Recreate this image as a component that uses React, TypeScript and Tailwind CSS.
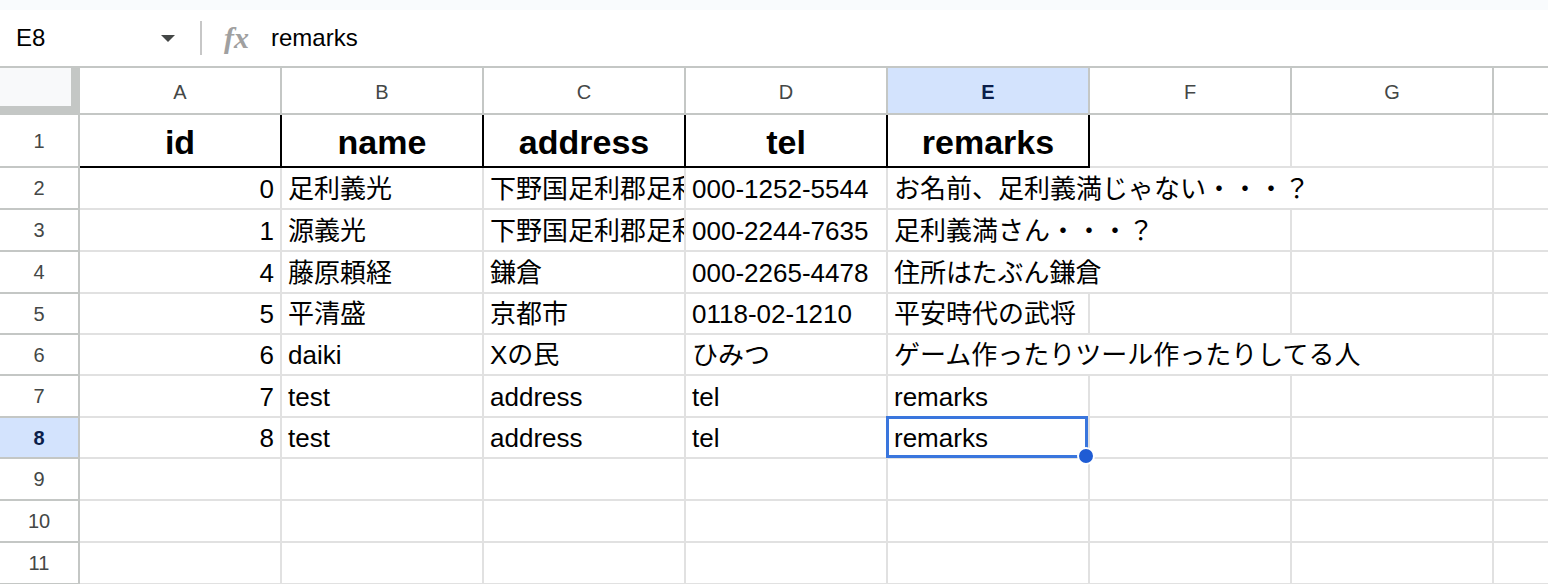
const cols = ["A", "B", "C", "D", "E", "F", "G", "H"];

type Cell = { v: string; right?: boolean; clip?: boolean };

const body: Cell[][] = [
  [{ v: "0", right: true }, { v: "足利義光" }, { v: "下野国足利郡足利荘", clip: true }, { v: "000-1252-5544" }, { v: "お名前、足利義満じゃない・・・？" }],
  [{ v: "1", right: true }, { v: "源義光" }, { v: "下野国足利郡足利荘", clip: true }, { v: "000-2244-7635" }, { v: "足利義満さん・・・？" }],
  [{ v: "4", right: true }, { v: "藤原頼経" }, { v: "鎌倉" }, { v: "000-2265-4478" }, { v: "住所はたぶん鎌倉" }],
  [{ v: "5", right: true }, { v: "平清盛" }, { v: "京都市" }, { v: "0118-02-1210" }, { v: "平安時代の武将" }],
  [{ v: "6", right: true }, { v: "daiki" }, { v: "Xの民" }, { v: "ひみつ" }, { v: "ゲーム作ったりツール作ったりしてる人" }],
  [{ v: "7", right: true }, { v: "test" }, { v: "address" }, { v: "tel" }, { v: "remarks" }],
  [{ v: "8", right: true }, { v: "test" }, { v: "address" }, { v: "tel" }, { v: "remarks" }],
];

// cells whose right gridline is covered by overflowing text
const hidden: Record<number, number[]> = { 2: [4, 5], 3: [4], 4: [4], 6: [4, 5] };

const font = { fontFamily: '"Liberation Sans", Arial, "Noto Sans CJK JP", sans-serif' };

function ColHeader({ c, i }: { c: string; i: number }) {
  const sel = c === "E";
  return (
    <div
      className={
        "flex items-center justify-center border-b-2 border-[#c4c7c5] pt-[2px] text-[20px] " +
        (i < 7 ? "border-r-2 " : "") +
        (sel ? "bg-[#d3e3fd] font-bold text-[#0b1e4a]" : "text-[#444746]")
      }
    >
      {i < 7 ? c : ""}
    </div>
  );
}

function RowHeader({ n }: { n: number }) {
  const sel = n === 8;
  return (
    <div
      className={
        "flex items-center justify-center border-b-2 border-r-2 border-[#c4c7c5] text-[20px] " +
        (sel ? "bg-[#d3e3fd] font-bold text-[#0b1e4a]" : "text-[#444746]")
      }
    >
      {n}
    </div>
  );
}

export default function App() {
  const titles = ["id", "name", "address", "tel", "remarks"];
  return (
    <div className="h-[584px] w-[1548px] overflow-hidden bg-white text-black" style={font}>
      {/* formula bar */}
      <div className="h-[10px] bg-[#f9fbfd]" />
      <div className="flex h-[58px] items-center border-b-2 border-[#c4c7c5] bg-white">
        <div className="flex w-[200px] items-center justify-between pl-[16px] pr-[25px]">
          <span className="text-[24px] leading-none">E8</span>
          <span className="h-0 w-0 border-l-[7px] border-r-[7px] border-t-[7px] border-l-transparent border-r-transparent border-t-[#444746]" />
        </div>
        <div className="h-[34px] w-[2px] bg-[#c7c7c7]" />
        <span
          className="ml-[22px] text-[30px] font-bold italic leading-none text-[#a0a0a0]"
          style={{ fontFamily: '"Liberation Serif", serif' }}
        >
          fx
        </span>
        <span className="ml-[22px] text-[24px] leading-none">remarks</span>
      </div>

      {/* grid */}
      <div className="grid grid-cols-[80px_repeat(7,202px)_1fr] grid-rows-[47px_53px_42px_42px_42px_41px_41px_42px_41px_42px_42px_42px]">
        {/* corner */}
        <div className="border-b-[9px] border-r-[9px] border-[#c4c7c5] bg-[#f8f9fa]" />
        {cols.map((c, i) => (
          <ColHeader key={c} c={c} i={i} />
        ))}

        {/* row 1 titles */}
        <RowHeader n={1} />
        {cols.map((c, i) =>
          i < 5 ? (
            <div
              key={c}
              className="flex min-w-0 items-end justify-center border-b-2 border-r-2 border-black pb-[5px] text-[34px] font-bold leading-[38px]"
            >
              {titles[i]}
            </div>
          ) : (
            <div key={c} className={"border-b-2 border-[#e1e1e1] " + (i < 7 ? "border-r-2" : "")} />
          )
        )}

        {body.map((row, ri) => {
          const n = ri + 2;
          const isSel = n === 8;
          return [
            <RowHeader key={"h" + n} n={n} />,
            ...cols.map((c, i) => {
              const cell = row[i];
              const noRight = (hidden[n] || []).includes(i) || i === 7;
              return (
                <div
                  key={c + n}
                  className={
                    "relative flex min-w-0 items-end whitespace-nowrap border-b-2 border-[#e1e1e1] pb-[4px] text-[26px] leading-[30px] " +
                    (noRight ? "" : "border-r-2 ") +
                    (cell?.right ? "justify-end pr-[6px] " : "justify-start pl-[6px] ") +
                    (cell?.clip ? "overflow-hidden " : "overflow-visible ") +
                    (isSel && c === "E" ? "z-10" : "")
                  }
                >
                  {cell?.v}
                  {isSel && c === "E" && (
                    <div className="absolute -bottom-[1px] -left-[2px] -top-[2px] right-0 border-[3px] border-[#3a76dd]">
                      <div className="absolute -bottom-[10px] -right-[10px] h-[18px] w-[18px] rounded-full border-2 border-white bg-[#1f5cd4]" />
                    </div>
                  )}
                </div>
              );
            }),
          ];
        })}

        {[9, 10, 11].map((n) => [
          <RowHeader key={"h" + n} n={n} />,
          ...cols.map((c, i) => (
            <div key={c + n} className={"border-b-2 border-[#e1e1e1] " + (i < 7 ? "border-r-2" : "")} />
          )),
        ])}
      </div>
    </div>
  );
}
